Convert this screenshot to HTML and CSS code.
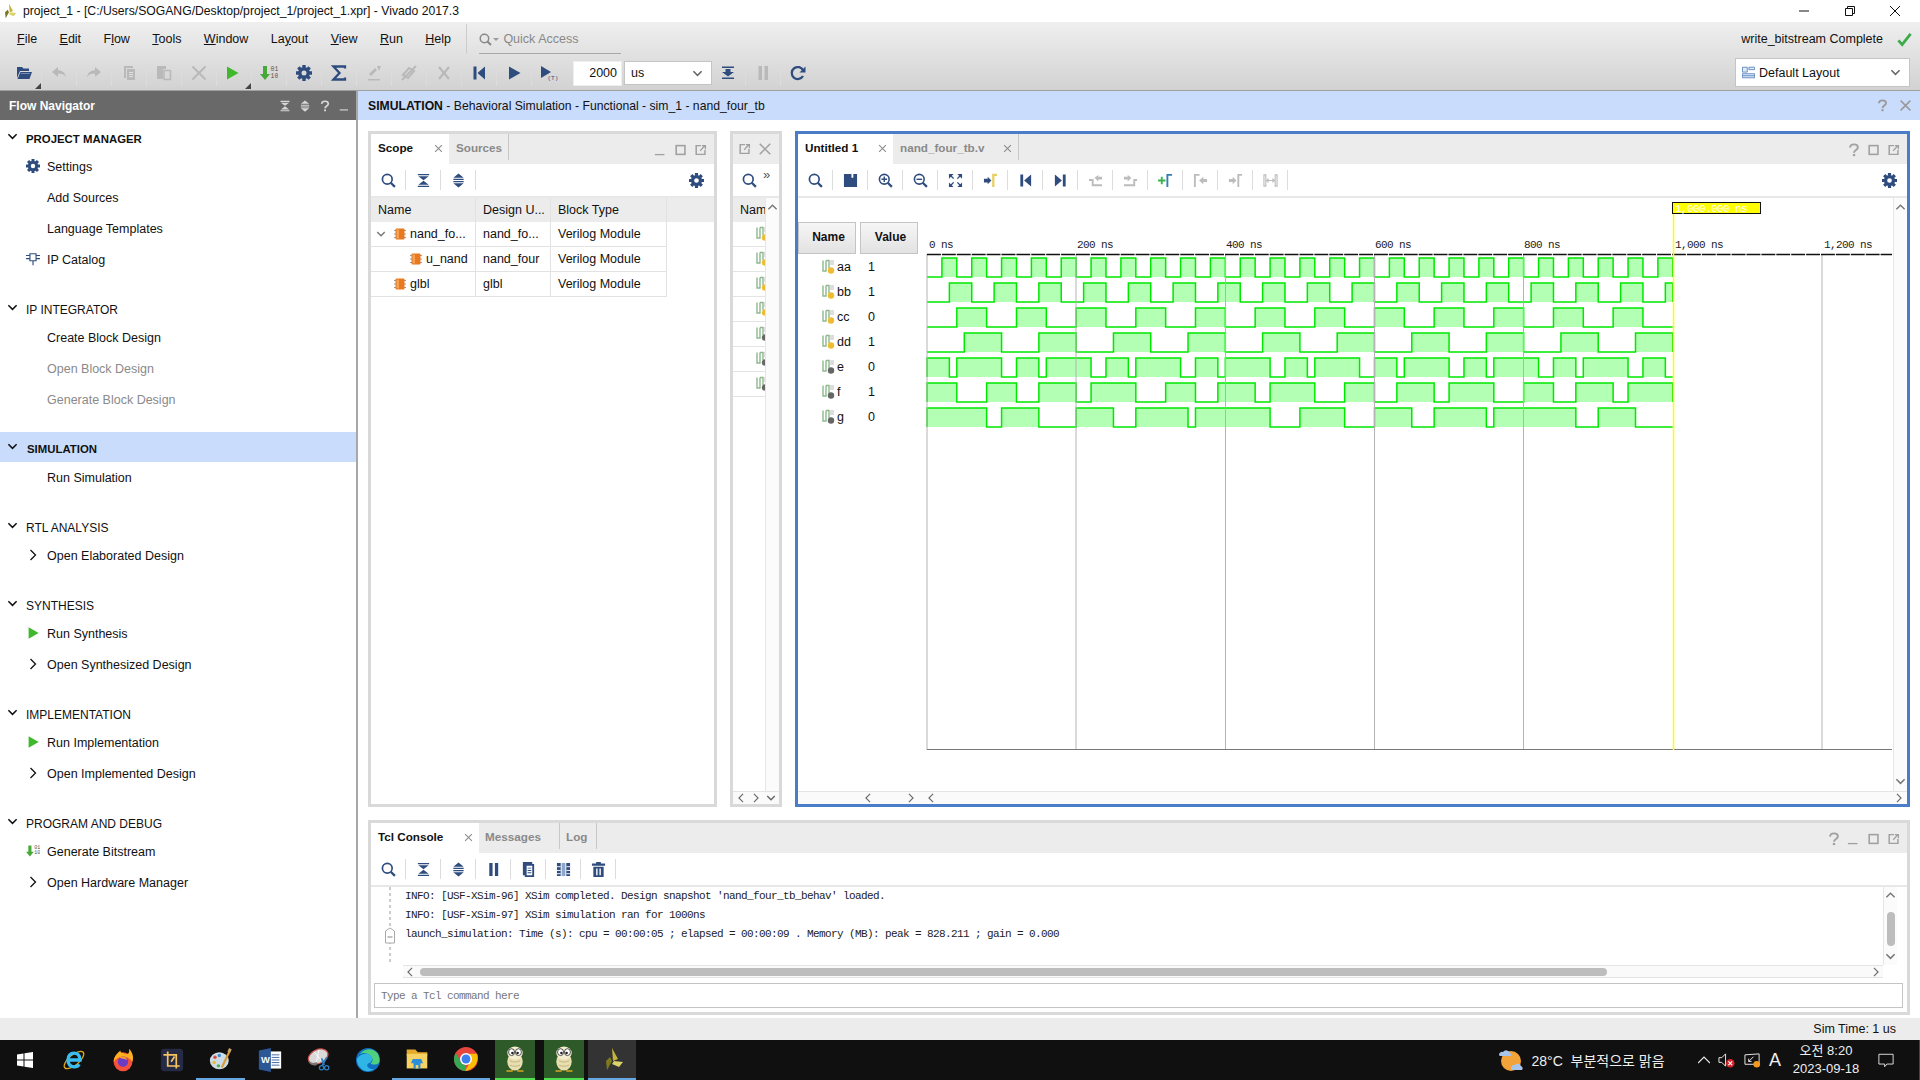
FILE: index.html
```html
<!DOCTYPE html>
<html>

<head>
    <meta charset="utf-8">
    <title>project_1 - Vivado 2017.3</title>
    <link rel="stylesheet" href="styles.css">
</head>

<body>
    <svg class="sprite" xmlns="http://www.w3.org/2000/svg">
        <symbol id="i-search" viewBox="0 0 16 16"><circle cx="6.7" cy="6.7" r="5.2" fill="none" stroke="currentColor" stroke-width="1.8"/><path d="M10.4 10.4l4.4 4.4" stroke="currentColor" stroke-width="2.4"/></symbol>
        <symbol id="i-collapse" viewBox="0 0 16 16"><path fill="currentColor" d="M2 1h12v1.500H2zM2.500 3.500h11L8 7.700zM8 8.300l5.500 4.200h-11zM2 13.500h12V15H2z"/></symbol>
        <symbol id="i-expand" viewBox="0 0 16 16"><path fill="currentColor" d="M8 .5L13.500 5h-11zM2.500 6.200h11v1.300h-11zM2.500 8.600h11v1.300h-11zM2.500 11h11L8 15.500z"/></symbol>
        <symbol id="i-gear" viewBox="0 0 16 16"><circle cx="8" cy="8" r="4.2" fill="none" stroke="currentColor" stroke-width="3.4"/><path id="teeth" fill="currentColor" d="M6.3 0h3.4v3H6.3zM6.3 13h3.4v3H6.3zM0 6.3h3v3.4H0zM13 6.3h3v3.4h-3z"/><path fill="currentColor" transform="rotate(45 8 8)" d="M6.3 0h3.4v3H6.3zM6.3 13h3.4v3H6.3zM0 6.3h3v3.4H0zM13 6.3h3v3.4h-3z"/></symbol>
        <symbol id="i-min" viewBox="0 0 16 16"><path fill="currentColor" d="M1 12.5h11V14H1z"/></symbol>
        <symbol id="i-max" viewBox="0 0 16 16"><rect x="2.5" y="3" width="10" height="10" fill="none" stroke="currentColor" stroke-width="1.8"/></symbol>
        <symbol id="i-float" viewBox="0 0 16 16"><path fill="none" stroke="currentColor" stroke-width="1.7" d="M8 3H2.5v10h10V8"/><path fill="none" stroke="currentColor" stroke-width="1.5" d="M7 9l5-5.5M9 3h4v4"/></symbol>
        <symbol id="i-close" viewBox="0 0 16 16"><path fill="none" stroke="currentColor" stroke-width="1.8" d="M2 2l12 12M14 2L2 14"/></symbol>
        <symbol id="i-help" viewBox="0 0 16 16"><path fill="none" stroke="currentColor" stroke-width="2.2" d="M3.5 5.2C3.7 2.8 5.7 1.6 8 1.6s4.4 1.2 4.4 3.4c0 3-4.2 3-4.4 6.2"/><path fill="currentColor" d="M6.7 12.5h2.6V15H6.7z"/></symbol>
        <symbol id="i-down" viewBox="0 0 12 12"><path fill="none" stroke="currentColor" stroke-width="1.7" d="M1.5 3.5L6 8l4.5-4.5"/></symbol>
        <symbol id="i-up" viewBox="0 0 12 12"><path fill="none" stroke="currentColor" stroke-width="1.5" d="M1.5 8L6 3.5 10.500 8"/></symbol>
        <symbol id="i-right" viewBox="0 0 12 12"><path fill="none" stroke="currentColor" stroke-width="1.3" d="M3.500 1L8.500 6l-5 5"/></symbol>
        <symbol id="i-left" viewBox="0 0 12 12"><path fill="none" stroke="currentColor" stroke-width="1.3" d="M8.500 1L3.500 6l5 5"/></symbol>
        <symbol id="i-chip" viewBox="0 0 14 14"><path fill="#9a9a9a" d="M1 3h12v1H1zM1 6.500h12v1H1zM1 10h12v1H1z"/><rect x="2.500" y="1.500" width="9" height="11" rx="1" fill="#e8791f"/><rect x="3.500" y="2.500" width="2.500" height="9" fill="#f4a255"/></symbol>
        <symbol id="i-sig-y" viewBox="0 0 14 16"><path fill="none" stroke="#8db98d" stroke-width="1.400" d="M2 1.500V12h3V1.500M5 1.500h3V9"/><path fill="none" stroke="#bbb" d="M10 1v5M12 1v5"/><circle cx="10" cy="11.500" r="3.200" fill="#eebb33"/></symbol>
        <symbol id="i-sig-g" viewBox="0 0 14 16"><path fill="none" stroke="#8db98d" stroke-width="1.400" d="M2 1.500V12h3V1.500M5 1.500h3V9"/><path fill="none" stroke="#bbb" d="M10 1v5M12 1v5"/><circle cx="10" cy="11.500" r="3.200" fill="#666"/></symbol>
        <symbol id="i-ipcat" viewBox="0 0 16 16"><path fill="none" stroke="currentColor" stroke-width="1.300" d="M4.500 2h7v8h-7zM8 10v5M0 4h4.500M0 7.500h4.500M11.500 4H16M11.500 7.500H16"/></symbol>
        <symbol id="i-play" viewBox="0 0 16 16"><path fill="currentColor" d="M3 1.500v13L14.500 8z"/></symbol>
        <symbol id="i-bits" viewBox="0 0 18 16"><path fill="#46a838" d="M3 1h4v8h3l-5 6-5-6h3z"/><text class="bits" x="10.500" y="6">01</text><text class="bits" x="10.500" y="12.500">10</text></symbol>
        <symbol id="i-open" viewBox="0 0 16 16"><path fill="#2f4c7e" d="M1 2h5l1.500 1.500H13V6H4L1 13z"/><path fill="#2f4c7e" d="M4.500 7H16l-2.500 7H1.500z"/><path fill="#fff" opacity=".35" d="M5 8h9l-.4 1H4.600z"/></symbol>
        <symbol id="i-undo" viewBox="0 0 16 16"><path fill="currentColor" d="M1 7l6-5v3.200c4 0 7 2 8 7-2-3-4-3.400-8-3.400V12z"/></symbol>
        <symbol id="i-redo" viewBox="0 0 16 16"><path fill="currentColor" d="M15 7L9 2v3.200c-4 0-7 2-8 7 2-3 4-3.400 8-3.400V12z"/></symbol>
        <symbol id="i-copy" viewBox="0 0 16 16"><path fill="currentColor" d="M3 1h9v2H5v10H3z"/><path fill="currentColor" d="M6 4h8v11H6z"/><path stroke="#e0e0e0" d="M8 7.500h4M8 9.500h4M8 11.500h4"/></symbol>
        <symbol id="i-paste" viewBox="0 0 16 16"><path fill="currentColor" d="M1 1h9v3H7v10H1z"/><path fill="none" stroke="currentColor" stroke-width="1.500" d="M8 5.500h6.500V14.500H8z"/></symbol>
        <symbol id="i-del" viewBox="0 0 16 16"><path fill="none" stroke="currentColor" stroke-width="2" d="M1.500 1.500l13 13M14.500 1.500l-13 13"/></symbol>
        <symbol id="i-sigma" viewBox="0 0 16 16"><path fill="none" stroke="currentColor" stroke-width="2.300" d="M14 3.500V1.500H2.500L8.500 8 2.500 14.500H14v-2"/></symbol>
        <symbol id="i-impl" viewBox="0 0 16 16"><path fill="currentColor" d="M2 14h12v1.500H2zM3 9l6-6 2 2-6 6zM11 1l4 0-2 5z"/></symbol>
        <symbol id="i-route" viewBox="0 0 16 16"><path fill="none" stroke="currentColor" stroke-width="2" d="M2 10l6-7 5 3-6 7zM1 15L15 1"/></symbol>
        <symbol id="i-xchip" viewBox="0 0 16 16"><path fill="none" stroke="currentColor" stroke-width="2.200" d="M3 2l10 12M13 2L3 14"/><path fill="currentColor" d="M6 6h4v4H6z"/></symbol>
        <symbol id="i-back" viewBox="0 0 16 16"><path fill="currentColor" d="M2.500 1.500h3v13h-3zM14 1.500v13L6.500 8z"/></symbol>
        <symbol id="i-fwd" viewBox="0 0 16 16"><path fill="currentColor" d="M10.500 1.500h3v13h-3zM2 1.500v13L9.500 8z"/></symbol>
        <symbol id="i-playt" viewBox="0 0 18 16"><path fill="currentColor" d="M1 1v12L11 7z"/><text class="bits tt" x="7.500" y="15">(T)</text></symbol>
        <symbol id="i-restart" viewBox="0 0 16 16"><path fill="currentColor" d="M2 1.500h12v1.500H2zM5.500 4h5v3H14l-6 4.500L2 7h3.500zM2 12.500h12V14H2z"/></symbol>
        <symbol id="i-pause" viewBox="0 0 16 16"><path fill="currentColor" d="M3.500 1h3.500v14H3.500zM9.500 1H13v14H9.500z"/></symbol>
        <symbol id="i-refresh" viewBox="0 0 16 16"><path fill="none" stroke="currentColor" stroke-width="2.300" d="M13 11a6 6 0 1 1 .2-5.500"/><path fill="currentColor" d="M15.500 1.500v6h-6z"/></symbol>
        <symbol id="i-save" viewBox="0 0 16 16"><path fill="currentColor" d="M1 1h8v4h2V1h4v14H1z"/></symbol>
        <symbol id="i-zin" viewBox="0 0 16 16"><circle cx="6.700" cy="6.700" r="5.200" fill="none" stroke="currentColor" stroke-width="1.700"/><path stroke="currentColor" stroke-width="2.400" d="M10.400 10.400l4.400 4.400"/><path stroke="currentColor" stroke-width="1.500" d="M3.700 6.700h6M6.700 3.700v6"/></symbol>
        <symbol id="i-zout" viewBox="0 0 16 16"><circle cx="6.700" cy="6.700" r="5.200" fill="none" stroke="currentColor" stroke-width="1.700"/><path stroke="currentColor" stroke-width="2.400" d="M10.400 10.400l4.400 4.400"/><path stroke="currentColor" stroke-width="1.500" d="M3.700 6.700h6"/></symbol>
        <symbol id="i-fit" viewBox="0 0 16 16"><path fill="currentColor" d="M1 1h5L1 6zM15 1v5l-5-5zM1 15v-5l5 5zM15 15h-5l5-5z"/><path stroke="currentColor" stroke-width="1.500" d="M3 3l3 3M13 3l-3 3M3 13l3-3M13 13l-3-3"/></symbol>
        <symbol id="i-gocur" viewBox="0 0 16 16"><path fill="#2f4c7e" d="M1 6h4V4l4 4-4 4v-2H1z"/><path fill="none" stroke="#e8cf68" stroke-width="2.500" d="M11 15V2h4"/></symbol>
        <symbol id="i-prevt" viewBox="0 0 16 16"><path fill="currentColor" d="M1 6.500h5V12h9v2H4V8.500H1zM7 5l4-3v2h4v3h-4v2z"/></symbol>
        <symbol id="i-nextt" viewBox="0 0 16 16"><path fill="currentColor" d="M15 6.500h-4V12H1v2h12V8.500h2zM1 4h4V2l4 3-4 4V7H1z"/></symbol>
        <symbol id="i-addm" viewBox="0 0 16 16"><path fill="#3cb44a" d="M0 7h3V4h2v3h3v2H5v3H3V9H0z"/><path fill="none" stroke="#2e7fb8" stroke-width="2" d="M10 15V2h5"/></symbol>
        <symbol id="i-prevm" viewBox="0 0 16 16"><path fill="none" stroke="currentColor" stroke-width="2" d="M2 15V2h5"/><path fill="currentColor" d="M15 6.500h-4V4L6.500 8l4.500 4v-2.500h4z"/></symbol>
        <symbol id="i-nextm" viewBox="0 0 16 16"><path fill="currentColor" d="M1 6.500h4V4l4 4-4 4v-2.500H1z"/><path fill="none" stroke="currentColor" stroke-width="2" d="M11 15V2h4"/></symbol>
        <symbol id="i-swap" viewBox="0 0 16 16"><path fill="none" stroke="currentColor" stroke-width="1.200" d="M1 2h2v12H1zM13 2h2v12h-2zM4 8h8M6 6L4 8l2 2M10 6l2 2-2 2"/></symbol>
        <symbol id="i-page" viewBox="0 0 16 16"><path fill="currentColor" fill-rule="evenodd" d="M2 0h10v2h2v14H4v-2H2zM6 4v10h6V4zM7 6h4v1H7zM7 8.500h4v1H7zM7 11h4v1H7z"/></symbol>
        <symbol id="i-cols" viewBox="0 0 16 16"><path fill="currentColor" d="M1 1h4v14H1zM11 1h4v14h-4z"/><path fill="#8ea6cc" d="M6 1h4v14H6z"/><path stroke="#fff" d="M1 5h4M1 9h4M1 12.500h4M11 5h4M11 9h4M11 12.500h4"/></symbol>
        <symbol id="i-trash" viewBox="0 0 16 16"><path fill="currentColor" fill-rule="evenodd" d="M5.500 0h5v1.500H15V4H1V1.500h4.500zM2.500 5h11v11h-11zM5.500 7v7H7V7zM9 7v7h1.500V7z"/></symbol>
        <symbol id="i-layout" viewBox="0 0 16 16"><path fill="#dfeafa" stroke="#4d7cb8" d="M.5 1.500h6v6h-6zM8.500 1.500h7v3h-7zM.5 9.500h15v5H.5z"/><path stroke="#4d7cb8" d="M.5 12h15"/></symbol>
        <symbol id="i-vivado" viewBox="0 0 24 24"><path fill="#c3b23c" d="M12 1l6 11-5 2z"/><path fill="#7d7a1e" d="M10 10l2 4-5 9-1-9z"/><path fill="#dcd46a" d="M14 14l9 1-4 5-7-3z"/></symbol>
        <symbol id="i-penguin" viewBox="0 0 28 32"><ellipse cx="14" cy="19" rx="9" ry="10.500" fill="#e9deb0"/><ellipse cx="14" cy="9" rx="9" ry="7.500" fill="#f4edcf"/><ellipse cx="10" cy="8" rx="3.500" ry="4" fill="#fff" stroke="#333"/><ellipse cx="18" cy="8" rx="3.500" ry="4" fill="#fff" stroke="#333"/><circle cx="11" cy="9" r="1.500" fill="#222"/><circle cx="17" cy="9" r="1.500" fill="#222"/><path fill="#d9a520" d="M4 29h8l-1 2H4zM16 29h8v2h-7z"/><path fill="none" stroke="#b9ad78" d="M8 18c4 2 8 2 12 0M8 23c4 2 8 2 12 0"/></symbol>
    </svg>

    <div class="titlebar">
        <svg class="title-logo"><use href="#i-vivado"/></svg>
        <span class="title-text">project_1 - [C:/Users/SOGANG/Desktop/project_1/project_1.xpr] - Vivado 2017.3</span>
        <div class="win-buttons">
            <svg viewBox="0 0 12 12"><path stroke="#111" d="M1 6h10"/></svg>
            <svg viewBox="0 0 12 12"><path fill="none" stroke="#111" d="M1.500 3.500h7v7h-7zM3.500 3.500v-2h7v7h-2"/></svg>
            <svg viewBox="0 0 12 12"><path stroke="#111" d="M1 1l10 10M11 1L1 11"/></svg>
        </div>
    </div>

    <div class="appbar">
        <div class="menubar">
            <span><u>F</u>ile</span>
            <span><u>E</u>dit</span>
            <span>F<u>l</u>ow</span>
            <span><u>T</u>ools</span>
            <span><u>W</u>indow</span>
            <span>La<u>y</u>out</span>
            <span><u>V</u>iew</span>
            <span><u>R</u>un</span>
            <span><u>H</u>elp</span>
            <div class="quick-access">
                <svg class="ic-s off"><use href="#i-search"/></svg>
                <span class="quick-arrow"></span>
                <span class="quick-text">Quick Access</span>
            </div>
            <div class="run-status">write_bitstream Complete
                <svg class="status-check" viewBox="0 0 16 16"><path fill="none" stroke="#3cab4a" stroke-width="3" d="M1.500 9l4 4.500L14.500 2"/></svg>
            </div>
        </div>
        <div class="toolbar">
            <button class="tbtn has-menu"><svg class="ic"><use href="#i-open"/></svg></button>
            <button class="tbtn off"><svg class="ic"><use href="#i-undo"/></svg></button>
            <button class="tbtn off"><svg class="ic"><use href="#i-redo"/></svg></button>
            <button class="tbtn off"><svg class="ic"><use href="#i-copy"/></svg></button>
            <button class="tbtn off"><svg class="ic"><use href="#i-paste"/></svg></button>
            <button class="tbtn off"><svg class="ic"><use href="#i-del"/></svg></button>
            <button class="tbtn green has-menu"><svg class="ic"><use href="#i-play"/></svg></button>
            <button class="tbtn"><svg class="ic ic-wide"><use href="#i-bits"/></svg></button>
            <button class="tbtn"><svg class="ic"><use href="#i-gear"/></svg></button>
            <button class="tbtn"><svg class="ic"><use href="#i-sigma"/></svg></button>
            <button class="tbtn off"><svg class="ic"><use href="#i-impl"/></svg></button>
            <button class="tbtn off"><svg class="ic"><use href="#i-route"/></svg></button>
            <button class="tbtn off"><svg class="ic"><use href="#i-xchip"/></svg></button>
            <button class="tbtn"><svg class="ic"><use href="#i-back"/></svg></button>
            <button class="tbtn"><svg class="ic"><use href="#i-play"/></svg></button>
            <button class="tbtn"><svg class="ic ic-wide"><use href="#i-playt"/></svg></button>
            <div class="time-input">2000</div>
            <div class="unit-select">us<svg class="chev-sel"><use href="#i-down"/></svg></div>
            <button class="tbtn after-select"><svg class="ic"><use href="#i-restart"/></svg></button>
            <button class="tbtn off"><svg class="ic"><use href="#i-pause"/></svg></button>
            <button class="tbtn"><svg class="ic"><use href="#i-refresh"/></svg></button>
            <div class="layout-select">
                <svg class="ic-layout"><use href="#i-layout"/></svg>
                <span>Default Layout</span>
                <svg class="chev-sel"><use href="#i-down"/></svg>
            </div>
        </div>
    </div>

    <div class="workspace">
        <div class="nav">
            <div class="nav-head">
                <span>Flow Navigator</span>
                <div class="nav-head-icons">
                    <svg><use href="#i-collapse"/></svg>
                    <svg><use href="#i-expand"/></svg>
                    <svg><use href="#i-help"/></svg>
                    <svg><use href="#i-min"/></svg>
                </div>
            </div>
            <div class="nav-body">
                <div class="nav-section">
                    <div class="sec-title strong"><svg><use href="#i-down"/></svg>PROJECT MANAGER</div>
                    <div class="nav-item"><span class="slot"><svg class="navy"><use href="#i-gear"/></svg></span>Settings</div>
                    <div class="nav-item"><span class="slot"></span>Add Sources</div>
                    <div class="nav-item"><span class="slot"></span>Language Templates</div>
                    <div class="nav-item"><span class="slot"><svg class="navy"><use href="#i-ipcat"/></svg></span>IP Catalog</div>
                </div>
                <div class="nav-section">
                    <div class="sec-title"><svg><use href="#i-down"/></svg>IP INTEGRATOR</div>
                    <div class="nav-item"><span class="slot"></span>Create Block Design</div>
                    <div class="nav-item dim"><span class="slot"></span>Open Block Design</div>
                    <div class="nav-item dim"><span class="slot"></span>Generate Block Design</div>
                </div>
                <div class="nav-section">
                    <div class="sec-title strong active"><svg><use href="#i-down"/></svg>SIMULATION</div>
                    <div class="nav-item"><span class="slot"></span>Run Simulation</div>
                </div>
                <div class="nav-section">
                    <div class="sec-title"><svg><use href="#i-down"/></svg>RTL ANALYSIS</div>
                    <div class="nav-item"><span class="slot"><svg class="arrow"><use href="#i-right"/></svg></span>Open Elaborated Design</div>
                </div>
                <div class="nav-section">
                    <div class="sec-title"><svg><use href="#i-down"/></svg>SYNTHESIS</div>
                    <div class="nav-item"><span class="slot"><svg class="run"><use href="#i-play"/></svg></span>Run Synthesis</div>
                    <div class="nav-item"><span class="slot"><svg class="arrow"><use href="#i-right"/></svg></span>Open Synthesized Design</div>
                </div>
                <div class="nav-section">
                    <div class="sec-title"><svg><use href="#i-down"/></svg>IMPLEMENTATION</div>
                    <div class="nav-item"><span class="slot"><svg class="run"><use href="#i-play"/></svg></span>Run Implementation</div>
                    <div class="nav-item"><span class="slot"><svg class="arrow"><use href="#i-right"/></svg></span>Open Implemented Design</div>
                </div>
                <div class="nav-section">
                    <div class="sec-title"><svg><use href="#i-down"/></svg>PROGRAM AND DEBUG</div>
                    <div class="nav-item"><span class="slot"><svg><use href="#i-bits"/></svg></span>Generate Bitstream</div>
                    <div class="nav-item"><span class="slot"><svg class="arrow"><use href="#i-right"/></svg></span>Open Hardware Manager</div>
                </div>
            </div>
        </div>

        <div class="content">
            <div class="sim-head">
                <span><b>SIMULATION</b> - Behavioral Simulation - Functional - sim_1 - nand_four_tb</span>
                <div class="sim-head-icons">
                    <svg><use href="#i-help"/></svg>
                    <svg><use href="#i-close"/></svg>
                </div>
            </div>
            <div class="panes">
                <div class="pane-row">
                    <div class="panel scope-panel">
                        <div class="panel-tabs">
                            <div class="tab active tab-scope">Scope<svg class="tab-x"><use href="#i-close"/></svg></div>
                            <div class="tab">Sources</div>
                            <div class="panel-win">
                                <svg><use href="#i-min"/></svg>
                                <svg><use href="#i-max"/></svg>
                                <svg><use href="#i-float"/></svg>
                            </div>
                        </div>
                        <div class="panel-tools">
                            <span class="tool"><svg><use href="#i-search"/></svg></span>
                            <span class="tool"><svg><use href="#i-collapse"/></svg></span>
                            <span class="tool"><svg><use href="#i-expand"/></svg></span>
                            <span class="tool tool-end"><svg><use href="#i-gear"/></svg></span>
                        </div>
                        <div class="tree-row tree-head">
                            <div>Name</div><div>Design U...</div><div>Block Type</div>
                        </div>
                        <div class="tree-row tree-data">
                            <div class="tree-cell"><span class="twist"><svg><use href="#i-down"/></svg></span><svg class="chip"><use href="#i-chip"/></svg>nand_fo...</div>
                            <div>nand_fo...</div><div>Verilog Module</div>
                        </div>
                        <div class="tree-row tree-data">
                            <div class="tree-cell"><span class="twist lvl1"></span><svg class="chip"><use href="#i-chip"/></svg>u_nand</div>
                            <div>nand_four</div><div>Verilog Module</div>
                        </div>
                        <div class="tree-row tree-data">
                            <div class="tree-cell"><span class="twist"></span><svg class="chip"><use href="#i-chip"/></svg>glbl</div>
                            <div>glbl</div><div>Verilog Module</div>
                        </div>
                    </div>

                    <div class="panel objects-panel">
                        <div class="panel-tabs obj-tabs">
                            <svg><use href="#i-float"/></svg>
                            <svg><use href="#i-close"/></svg>
                        </div>
                        <div class="panel-tools obj-tools">
                            <svg class="obj-search"><use href="#i-search"/></svg>
                            <span class="more">»</span>
                        </div>
                        <div class="obj-body">
                            <div class="obj-list">
                                <div class="obj-head">Nam</div>
                                <div class="obj-row"><svg><use href="#i-sig-y"/></svg></div>
                                <div class="obj-row"><svg><use href="#i-sig-y"/></svg></div>
                                <div class="obj-row"><svg><use href="#i-sig-y"/></svg></div>
                                <div class="obj-row"><svg><use href="#i-sig-y"/></svg></div>
                                <div class="obj-row"><svg><use href="#i-sig-g"/></svg></div>
                                <div class="obj-row"><svg><use href="#i-sig-g"/></svg></div>
                                <div class="obj-row"><svg><use href="#i-sig-g"/></svg></div>
                            </div>
                            <div class="vscroll">
                                <svg><use href="#i-up"/></svg>
                            </div>
                        </div>
                        <div class="hscroll obj-hscroll">
                            <svg><use href="#i-left"/></svg>
                            <svg><use href="#i-right"/></svg>
                            <svg><use href="#i-down"/></svg>
                        </div>
                    </div>

                    <div class="panel wave-panel">
                        <div class="panel-tabs">
                            <div class="tab active tab-untitled">Untitled 1<svg class="tab-x"><use href="#i-close"/></svg></div>
                            <div class="tab tab-src">nand_four_tb.v<svg class="tab-x"><use href="#i-close"/></svg></div>
                            <div class="panel-win">
                                <svg><use href="#i-help"/></svg>
                                <svg><use href="#i-max"/></svg>
                                <svg><use href="#i-float"/></svg>
                            </div>
                        </div>
                        <div class="panel-tools">
                            <span class="tool"><svg><use href="#i-search"/></svg></span>
                            <span class="tool"><svg><use href="#i-save"/></svg></span>
                            <span class="tool"><svg><use href="#i-zin"/></svg></span>
                            <span class="tool"><svg><use href="#i-zout"/></svg></span>
                            <span class="tool"><svg><use href="#i-fit"/></svg></span>
                            <span class="tool"><svg><use href="#i-gocur"/></svg></span>
                            <span class="tool"><svg><use href="#i-back"/></svg></span>
                            <span class="tool"><svg><use href="#i-fwd"/></svg></span>
                            <span class="tool off"><svg><use href="#i-prevt"/></svg></span>
                            <span class="tool off"><svg><use href="#i-nextt"/></svg></span>
                            <span class="tool"><svg><use href="#i-addm"/></svg></span>
                            <span class="tool off"><svg><use href="#i-prevm"/></svg></span>
                            <span class="tool off"><svg><use href="#i-nextm"/></svg></span>
                            <span class="tool off"><svg><use href="#i-swap"/></svg></span>
                            <span class="tool tool-end"><svg><use href="#i-gear"/></svg></span>
                        </div>
                        <div class="wave-body">
                            <div class="wave-names">
                                <div class="wave-head"><div>Name</div><div>Value</div></div>
                                <div class="sig-row"><svg><use href="#i-sig-y"/></svg><span class="sig-name">aa</span><span>1</span></div>
                                <div class="sig-row"><svg><use href="#i-sig-y"/></svg><span class="sig-name">bb</span><span>1</span></div>
                                <div class="sig-row"><svg><use href="#i-sig-y"/></svg><span class="sig-name">cc</span><span>0</span></div>
                                <div class="sig-row"><svg><use href="#i-sig-y"/></svg><span class="sig-name">dd</span><span>1</span></div>
                                <div class="sig-row"><svg><use href="#i-sig-g"/></svg><span class="sig-name">e</span><span>0</span></div>
                                <div class="sig-row"><svg><use href="#i-sig-g"/></svg><span class="sig-name">f</span><span>1</span></div>
                                <div class="sig-row"><svg><use href="#i-sig-g"/></svg><span class="sig-name">g</span><span>0</span></div>
                            </div>
                            <svg class="wave" width="967" height="593" viewBox="0 0 967 593">
                                <!-- signal paths are in ns, scale is 149.16px per 200ns -->
                                <g class="sigs">
                                    <path transform="translate(1 60) scale(.7458 1)" d="M0 19H20V0H40V19H60V0H80V19H100V0H120V19H140V0H160V19H180V0H200V19H220V0H240V19H260V0H280V19H300V0H320V19H340V0H360V19H380V0H400V19H420V0H440V19H460V0H480V19H500V0H520V19H540V0H560V19H580V0H600V19H620V0H640V19H660V0H680V19H700V0H720V19H740V0H760V19H780V0H800V19H820V0H840V19H860V0H880V19H900V0H920V19H940V0H960V19H980V0H1000V19"/>
                                    <path transform="translate(1 85) scale(.7458 1)" d="M0 19H30V0H60V19H90V0H120V19H150V0H180V19H210V0H240V19H270V0H300V19H330V0H360V19H390V0H420V19H450V0H480V19H510V0H540V19H570V0H600V19H630V0H660V19H690V0H720V19H750V0H780V19H810V0H840V19H870V0H900V19H930V0H960V19H990V0H1000V19"/>
                                    <path transform="translate(1 110) scale(.7458 1)" d="M0 19H40V0H80V19H120V0H160V19H200V0H240V19H280V0H320V19H360V0H400V19H440V0H480V19H520V0H560V19H600V0H640V19H680V0H720V19H760V0H800V19H840V0H880V19H920V0H960V19H1000"/>
                                    <path transform="translate(1 135) scale(.7458 1)" d="M0 19H50V0H100V19H150V0H200V19H250V0H300V19H350V0H400V19H450V0H500V19H550V0H600V19H650V0H700V19H750V0H800V19H850V0H900V19H950V0H1000V19"/>
                                    <path transform="translate(1 160) scale(.7458 1)" d="M0 19V0H30V19H40V0H100V19H120V0H150V19H160V0H220V19H240V0H270V19H280V0H340V19H360V0H390V19H400V0H460V19H480V0H510V19H520V0H580V19H600V0H630V19H640V0H700V19H720V0H750V19H760V0H820V19H840V0H870V19H880V0H940V19H960V0H990V19H1000"/>
                                    <path transform="translate(1 185) scale(.7458 1)" d="M0 19V0H40V19H80V0H120V19H150V0H200V19H220V0H280V19H320V0H360V19H390V0H440V19H460V0H520V19H560V0H600V19H630V0H680V19H700V0H760V19H800V0H840V19H870V0H920V19H940V0H1000V19"/>
                                    <path transform="translate(1 210) scale(.7458 1)" d="M0 19V0H80V19H100V0H150V19H200V0H250V19H280V0H350V19H360V0H460V19H500V0H560V19H600V0H650V19H680V0H750V19H760V0H870V19H900V0H950V19H1000"/>
                                </g>
                                <path class="grid" d="M1 56V552M150 56V552M299.500 56V552M448.500 56V552M597.500 56V552M896 56V552"/>
                                <path class="ruler" d="M1 56.500H966"/>
                                <path class="baseline" d="M1 551.500H966"/>
                                <text class="tick" x="3" y="50">0 ns</text>
                                <text class="tick" x="151" y="50">200 ns</text>
                                <text class="tick" x="300" y="50">400 ns</text>
                                <text class="tick" x="449" y="50">600 ns</text>
                                <text class="tick" x="598" y="50">800 ns</text>
                                <text class="tick" x="749" y="50">1,000 ns</text>
                                <text class="tick" x="898" y="50">1,200 ns</text>
                                <path class="cursor" d="M747.500 15V552"/>
                                <rect class="flag" x="746.500" y="4.500" width="88" height="11"/>
                                <text class="flag-text" x="749" y="14">1,000.000 ns</text>
                            </svg>
                            <div class="vscroll">
                                <svg><use href="#i-up"/></svg>
                                <svg><use href="#i-down"/></svg>
                            </div>
                        </div>
                        <div class="hscroll wave-hscroll">
                            <div class="names-scroll">
                                <svg><use href="#i-left"/></svg>
                                <svg><use href="#i-right"/></svg>
                            </div>
                            <div class="plot-scroll">
                                <svg><use href="#i-left"/></svg>
                                <svg><use href="#i-right"/></svg>
                            </div>
                        </div>
                    </div>
                </div>

                <div class="panel console-panel">
                    <div class="panel-tabs">
                        <div class="tab active tab-tcl">Tcl Console<svg class="tab-x"><use href="#i-close"/></svg></div>
                        <div class="tab tab-msg">Messages</div>
                        <div class="tab tab-log">Log</div>
                        <div class="panel-win">
                            <svg><use href="#i-help"/></svg>
                            <svg><use href="#i-min"/></svg>
                            <svg><use href="#i-max"/></svg>
                            <svg><use href="#i-float"/></svg>
                        </div>
                    </div>
                    <div class="panel-tools">
                        <span class="tool"><svg><use href="#i-search"/></svg></span>
                        <span class="tool"><svg><use href="#i-collapse"/></svg></span>
                        <span class="tool"><svg><use href="#i-expand"/></svg></span>
                        <span class="tool"><svg><use href="#i-pause"/></svg></span>
                        <span class="tool"><svg><use href="#i-page"/></svg></span>
                        <span class="tool"><svg><use href="#i-cols"/></svg></span>
                        <span class="tool"><svg><use href="#i-trash"/></svg></span>
                    </div>
                    <div class="log-row">
                        <svg class="gutter" viewBox="0 0 32 78">
                            <path d="M19 0V78" stroke="#999" stroke-dasharray="3 3"/>
                            <path d="M14.500 44L19 41l4.500 3v12h-9z" fill="#fff" stroke="#aaa"/>
                            <path d="M16.500 50h5" stroke="#888"/>
                        </svg>
                        <div class="log">
                            <div>INFO: [USF-XSim-96] XSim completed. Design snapshot 'nand_four_tb_behav' loaded.</div>
                            <div>INFO: [USF-XSim-97] XSim simulation ran for 1000ns</div>
                            <div>launch_simulation: Time (s): cpu = 00:00:05 ; elapsed = 00:00:09 . Memory (MB): peak = 828.211 ; gain = 0.000</div>
                        </div>
                        <div class="vscroll log-vscroll">
                            <svg><use href="#i-up"/></svg>
                            <div class="vthumb"></div>
                            <svg><use href="#i-down"/></svg>
                        </div>
                    </div>
                    <div class="hscroll log-hscroll">
                        <svg><use href="#i-left"/></svg>
                        <div class="hthumb"></div>
                        <svg><use href="#i-right"/></svg>
                    </div>
                    <div class="tcl-input">Type a Tcl command here</div>
                </div>
            </div>
        </div>
    </div>

    <div class="statusbar">Sim Time: 1 us</div>

    <div class="taskbar">
        <div class="task start">
            <svg viewBox="0 0 16 16"><path fill="#fff" d="M0 2.500l6.500-1v6H0zM7.500 1.300L16 0v7.500H7.500zM0 8.500h6.500v6l-6.500-1zM7.500 8.500H16V16l-8.500-1.300z"/></svg>
        </div>
        <div class="task">
            <svg viewBox="0 0 28 28"><ellipse cx="14" cy="14" rx="14" ry="6" transform="rotate(-40 14 14)" fill="none" stroke="#e0a81c" stroke-width="1.500"/><path fill="none" stroke="#39bdf0" stroke-width="4" d="M7 14h14c0-5-3-8-7-8s-7 3-7 8 3 8 7 8c3 0 5-1 6-3"/></svg>
        </div>
        <div class="task">
            <svg viewBox="0 0 28 28"><circle cx="14" cy="16" r="11" fill="#f5503c"/><path fill="#ffb01f" d="M3 16C4 8 9 5 11 3c0 4 3 2 6 4 3 1 5-1 4-6 4 4 6 10 4 15-3-4-7-6-11-6S6 13 3 16z"/><circle cx="14" cy="16" r="6" fill="#6a3bc4"/><path fill="#ff9c2a" d="M10 11c3-2 8-1 9 3-3-2-6-1-9-3z"/></svg>
        </div>
        <div class="task">
            <svg viewBox="0 0 28 28"><rect x="1" y="1" width="26" height="26" rx="4" fill="#262b45"/><path fill="none" stroke="#f6c560" stroke-width="2" d="M9 4v17h14M4 8h15v16"/><path stroke="#f6c560" stroke-width="2" d="M13 16l4-6"/></svg>
        </div>
        <div class="task seen">
            <svg viewBox="0 0 28 28"><ellipse cx="12" cy="16" rx="11" ry="10" fill="#cddce6"/><circle cx="7" cy="12" r="2" fill="#d94b3e"/><circle cx="6" cy="18" r="2" fill="#e8b93a"/><circle cx="11" cy="22" r="2" fill="#4bb04b"/><circle cx="12" cy="10" r="2" fill="#3c8fd6"/><path stroke="#d99a3a" stroke-width="2.500" d="M15 24L24 5"/><path stroke="#caa366" stroke-width="3.500" d="M23 6l2-4"/></svg>
        </div>
        <div class="task">
            <svg viewBox="0 0 28 28"><path fill="#fff" d="M10 4h17v20H10z"/><path stroke="#2b5797" d="M16 8h9M16 11h9M16 14h9M16 17h9M16 20h9"/><path fill="#2b5797" d="M1 3l14-3v28L1 25z"/><text class="word-w" x="3.500" y="18">W</text></svg>
        </div>
        <div class="task">
            <svg viewBox="0 0 28 28"><ellipse cx="13" cy="10" rx="12" ry="8" transform="rotate(-25 13 10)" fill="#d9d9d9" stroke="#c9504a" stroke-width="1.500"/><path stroke="#fff" d="M8 4l10 12M14 2l-3 14"/><path fill="#777" d="M1 15c3 3 8 3 11 1l-1 4c-4 1-8 0-10-5z"/><path fill="none" stroke="#2f7fc4" stroke-width="2" d="M17 12l3 8M23 11l-5 9"/><circle cx="17" cy="23" r="2.500" fill="none" stroke="#2f7fc4" stroke-width="1.500"/><circle cx="23" cy="23" r="2.500" fill="none" stroke="#2f7fc4" stroke-width="1.500"/></svg>
        </div>
        <div class="task">
            <svg viewBox="0 0 28 28"><circle cx="14" cy="14" r="14" fill="#0f6fc2"/><path fill="#4ed07f" d="M4 8c4-7 14-9 20-3 3 3 4 8 3 12-2 3-7 3-10 1 3-2 3-6 0-9C12 5 7 5 4 8z"/><path fill="#2fb6e6" d="M1 13c3-6 11-8 15-5 3 2 4 6 1 9-5 1-5 5-1 7 2 1 4 1 6 0-5 4-12 4-16 0-3-3-5-6-5-11z"/></svg>
        </div>
        <div class="task seen">
            <svg viewBox="0 0 28 28"><path fill="#e5a92c" d="M2 3h10l3 3h11v4H2z"/><path fill="#f6d264" d="M2 8h24v17H2z"/><path fill="#2a8fd8" d="M9 14h10l2 5h-3v6h-8v-6H7z"/><path fill="#f6d264" d="M12.500 21h3v4h-3z"/></svg>
        </div>
        <div class="task seen">
            <svg viewBox="0 0 28 28"><circle cx="14" cy="14" r="14" fill="#e8453c"/><path fill="#34a853" d="M14 28C6 28 0 22 0 14c0-3 1-5 2-7l7 12c1 1 3 2 5 2z"/><path fill="#fbbc05" d="M27 8c2 7-1 15-8 18-2 1-4 2-6 2l6-11c1-1 2-5-1-9z"/><circle cx="14" cy="14" r="7" fill="#fff"/><circle cx="14" cy="14" r="5.200" fill="#3d7ff0"/></svg>
        </div>
        <div class="task running tux"><svg viewBox="0 0 28 32"><use href="#i-penguin"/></svg></div>
        <div class="task running tux"><svg viewBox="0 0 28 32"><use href="#i-penguin"/></svg></div>
        <div class="task current"><svg viewBox="0 0 24 24"><use href="#i-vivado"/></svg></div>

        <div class="tray">
            <svg class="weather" viewBox="0 0 26 24"><circle cx="13" cy="13" r="10" fill="#f2a33a"/><path fill="#a8c4ea" d="M1 7a3 3 0 0 1 4-3 4 4 0 0 1 7 1 2.500 2.500 0 0 1 1 3H2a2 2 0 0 1-1-1zM13 20a3 3 0 0 1 4-3 3.500 3.500 0 0 1 6 1 2.500 2.500 0 0 1 1 4H14a2 2 0 0 1-1-2z"/></svg>
            <span class="weather-text">28°C&nbsp; 부분적으로 맑음</span>
            <svg class="tray-up" viewBox="0 0 12 12"><path fill="none" stroke="#eee" stroke-width="1.200" d="M0 9l6-6 6 6"/></svg>
            <svg class="tray-ic" viewBox="0 0 18 18"><path fill="none" stroke="#eee" d="M1 6h3l4-4v13l-4-4H1z"/><circle cx="13" cy="12" r="4.500" fill="#d8232a"/><path stroke="#fff" stroke-width="1.200" d="M11 10l4 4M15 10l-4 4"/></svg>
            <svg class="tray-ic" viewBox="0 0 18 18"><path fill="none" stroke="#eee" d="M1 3l15-1v11H1z"/><path stroke="#eee" d="M5 10l5-5M5 7v3h3"/><circle cx="13.500" cy="13" r="3.500" fill="#f39a1e"/></svg>
            <span class="tray-a">A</span>
            <div class="clock"><div>오전 8:20</div><div>2023-09-18</div></div>
            <svg class="tray-note" viewBox="0 0 18 16"><path fill="none" stroke="#eee" d="M1 1h16v11H10l-2.500 3V12H1z"/></svg>
        </div>
    </div>
</body>

</html>
```

FILE: styles.css
```css
body {
    margin: 0;
    width: 1920px;
    height: 1080px;
    overflow: hidden;
    display: flex;
    flex-direction: column;
    background: white;
    color: #111;
    font-family: "Liberation Sans", Arial, sans-serif;
    font-size: 12.5px;
}

.sprite {
    display: none;
}

.bits {
    font-family: "Liberation Mono", monospace;
    font-size: 6.5px;
    fill: #555;
}

.bits.tt {
    font-size: 6px;
    fill: #2f4c7e;
}

/* title bar */
.titlebar {
    flex: 0 0 22px;
    display: flex;
    align-items: center;
}

.title-logo {
    width: 16px;
    height: 18px;
    margin-left: 1px;
}

.title-text {
    margin-left: 6px;
    font-size: 12.2px;
}

.win-buttons {
    margin-left: auto;
    display: flex;
    gap: 33.5px;
    padding-right: 19px;
}

.win-buttons svg {
    width: 12px;
    height: 12px;
}

/* menu and main toolbar */
.appbar {
    flex: 0 0 69px;
    box-sizing: border-box;
    border-bottom: 1.5px solid #a0a0a0;
    background: linear-gradient(#efefef, #d2d2d2);
}

.menubar {
    height: 36px;
    box-sizing: border-box;
    padding: 0 0 2px 17px;
    display: flex;
    align-items: center;
    gap: 22.4px;
}

.quick-access {
    display: flex;
    align-items: center;
    height: 30px;
    margin-left: -7px;
    padding-left: 12px;
    width: 142px;
    border-left: 1px solid #ccc;
    position: relative;
    color: #888;
}

.quick-access::after {
    content: "";
    position: absolute;
    left: 12px;
    right: 0;
    bottom: 0;
    border-bottom: 1px solid #a8a8a8;
}

.ic-s {
    width: 13px;
    height: 13px;
    color: #888;
}

.quick-arrow {
    border: 3px solid transparent;
    border-top-color: #999;
    margin: 3px 4px 0 1px;
}

.run-status {
    margin-left: auto;
    display: flex;
    align-items: center;
    gap: 14px;
    padding-right: 8px;
}

.status-check {
    width: 15px;
    height: 15px;
}

.toolbar {
    display: flex;
    align-items: flex-start;
    padding-left: 6px;
}

.tbtn {
    width: 35px;
    height: 30px;
    padding: 0;
    border: 0;
    background: none;
    color: #2f4c7e;
    display: flex;
    align-items: center;
    justify-content: center;
    position: relative;
}

.tbtn + .tbtn::before {
    content: "";
    position: absolute;
    left: 0;
    top: 4px;
    bottom: 2px;
    border-left: 1px solid #dcdcdc;
}

.tbtn.off {
    color: #b9b9b9;
}

.tbtn.green {
    color: #3fb82b;
}

.tbtn.green svg {
    margin-right: 3px;
}

.has-menu::after {
    content: "";
    position: absolute;
    right: 0;
    bottom: -1px;
    border: 3px solid transparent;
    border-right-color: #444;
    border-bottom-color: #444;
}

.ic {
    width: 16px;
    height: 16px;
}

.ic-wide {
    width: 18px;
}

.time-input {
    box-sizing: border-box;
    width: 49px;
    height: 25px;
    margin: 3px 0 0 7px;
    padding-right: 4px;
    line-height: 23px;
    text-align: right;
    background: white;
    border: 1px solid #eee;
}

.unit-select {
    box-sizing: border-box;
    width: 88px;
    height: 24px;
    margin: 3px 0 0 2px;
    padding: 0 8px 0 6px;
    display: flex;
    align-items: center;
    justify-content: space-between;
    background: white;
    border: 1px solid #c4c4c4;
}

.chev-sel {
    width: 11px;
    height: 11px;
    color: #666;
}

.after-select {
    margin-left: -2px;
}

.layout-select {
    box-sizing: border-box;
    width: 175px;
    height: 29px;
    margin-left: auto;
    margin-right: 10px;
    padding: 0 8px 0 6px;
    display: flex;
    align-items: center;
    gap: 4px;
    background: white;
    border: 1px solid #c4c4c4;
}

.layout-select .chev-sel {
    margin-left: auto;
}

.ic-layout {
    width: 13px;
    height: 13px;
}

/* main area */
.workspace {
    flex: 0 0 927px;
    display: flex;
}

.nav {
    flex: 0 0 358px;
    box-sizing: border-box;
    border-right: 2px solid #a8a8a8;
}

.nav-head {
    height: 29px;
    display: flex;
    align-items: center;
    justify-content: space-between;
    padding-left: 9px;
    background: #696969;
    color: white;
    font-weight: bold;
    font-size: 12px;
}

.nav-head-icons {
    display: flex;
    gap: 8px;
    padding-right: 5px;
}

.nav-head-icons svg {
    width: 12px;
    height: 12px;
    color: #d8d8d8;
}

.nav-body {
    padding-top: 4px;
}

.nav-section {
    margin-bottom: 20px;
}

.sec-title {
    height: 27px;
    box-sizing: border-box;
    padding: 2px 0 0 7px;
    display: flex;
    align-items: center;
    font-size: 12px;
}

.sec-title svg {
    width: 11px;
    height: 11px;
    margin: -5px 8px 0 0;
}

.sec-title.strong {
    font-weight: bold;
    font-size: 11.4px;
}

.sec-title.active {
    height: 30px;
    margin-top: -3px;
    padding-top: 3px;
    background: #c9dcfc;
}

.sec-title.active svg {
    margin-right: 9px;
}

.nav-item {
    height: 31px;
    display: flex;
    align-items: center;
}

.nav-item.dim {
    color: #8a8a8a;
}

.slot {
    width: 47px;
    flex: none;
    display: flex;
    padding-left: 26px;
    box-sizing: border-box;
}

.slot svg {
    width: 14px;
    height: 14px;
    margin-top: -2px;
}

.slot .navy {
    color: #2f4c7e;
}

.slot .run {
    color: #3fb82b;
}

.slot .arrow {
    width: 12px;
    height: 12px;
    margin-left: 1px;
}

.content {
    flex: 1;
    min-width: 0;
}

.sim-head {
    height: 29px;
    padding: 0 8px 0 10px;
    display: flex;
    align-items: center;
    justify-content: space-between;
    background: #c9dcfc;
    font-size: 12.2px;
}

.sim-head-icons {
    display: flex;
    gap: 10px;
}

.sim-head-icons svg {
    width: 13px;
    height: 13px;
    color: #999;
}

.panes {
    padding: 11px 10px 0;
}

.pane-row {
    height: 676px;
    display: flex;
    gap: 13px;
    margin-bottom: 13px;
}

/* panels */
.panel {
    box-sizing: border-box;
    border: 3px solid #d9d9d9;
    display: flex;
    flex-direction: column;
    min-width: 0;
}

.scope-panel {
    flex: 0 0 349px;
}

.objects-panel {
    flex: 0 0 52px;
}

.wave-panel {
    flex: 1;
    border-color: #4a7cc8;
}

.console-panel {
    height: 195px;
}

.panel-tabs {
    flex: 0 0 30px;
    display: flex;
    background: #ececec;
}

.tab {
    display: flex;
    align-items: center;
    height: 26px;
    padding: 0 6px 0 7px;
    font-weight: bold;
    font-size: 11.7px;
    color: #8a8a8a;
    border-right: 1px solid #c8c8c8;
}

.tab.active {
    height: 30px;
    box-sizing: border-box;
    padding-bottom: 4px;
    background: white;
    color: #111;
    border-right: 0;
}

.tab-x {
    width: 9px;
    height: 9px;
    margin-top: 3px;
    color: #888;
}

.tab-scope {
    width: 78px;
    justify-content: space-between;
}

.tab-untitled {
    width: 95px;
    justify-content: space-between;
}

.tab-src {
    width: 126px;
    box-sizing: border-box;
    justify-content: space-between;
}

.tab-tcl {
    width: 108px;
    justify-content: space-between;
}

.panel-win {
    margin-left: auto;
    display: flex;
    gap: 6px;
    padding: 9px 6px 0 0;
}

.panel-win svg {
    width: 14px;
    height: 14px;
    color: #a0a0a0;
}

.panel-tools {
    flex: 0 0 34px;
    box-sizing: border-box;
    border-bottom: 2px solid #e8e8e8;
    display: flex;
    align-items: center;
}

.tool {
    width: 35px;
    height: 20px;
    box-sizing: border-box;
    border-right: 1px solid #dcdcdc;
    display: flex;
    align-items: center;
    justify-content: center;
    color: #2f4c7e;
}

.tool.off {
    color: #bcbcbc;
}

.tool-end {
    margin-left: auto;
    border-right: 0;
}

.tool svg {
    width: 15px;
    height: 15px;
}

/* scope tree */
.tree-row {
    display: grid;
    grid-template-columns: 105px 75px 116px;
    height: 25px;
    align-items: stretch;
}

.tree-row > div {
    box-sizing: border-box;
    display: flex;
    align-items: center;
    padding-left: 7px;
    border-right: 1px solid #e2e2e2;
    white-space: nowrap;
}

.tree-head {
    height: 24px;
    background: #ececec;
}

.tree-data {
    width: 296px;
    border-bottom: 1px solid #e2e2e2;
    box-sizing: border-box;
}

.tree-row > .tree-cell {
    padding-left: 0;
}

.twist {
    width: 22px;
    flex: none;
    display: flex;
    justify-content: center;
    padding-left: 2px;
    box-sizing: border-box;
    color: #777;
}

.twist svg {
    width: 10px;
    height: 10px;
    margin-right: 5px;
}

.twist.lvl1 {
    width: 38px;
}

.chip {
    width: 14px;
    height: 14px;
    margin-right: 3px;
    flex: none;
}

/* objects strip */
.obj-tabs {
    align-items: center;
    gap: 6px;
    padding-left: 5px;
    color: #a0a0a0;
}

.obj-tabs svg {
    width: 14px;
    height: 14px;
}

.obj-tools {
    padding-left: 9px;
    align-items: center;
    overflow: hidden;
}

.obj-search {
    width: 15px;
    height: 15px;
    flex: none;
    color: #2f4c7e;
}

.more {
    margin: -12px 0 0 6px;
    color: #555;
    font-size: 13px;
}

.obj-body {
    flex: 1;
    display: flex;
    min-height: 0;
}

.obj-list {
    width: 32px;
    overflow: hidden;
}

.obj-head {
    height: 24px;
    line-height: 24px;
    padding-left: 7px;
    background: #ececec;
}

.obj-row {
    box-sizing: border-box;
    height: 25px;
    border-bottom: 1px solid #e4e4e4;
    display: flex;
    align-items: center;
    padding-left: 22px;
}

.obj-row svg {
    flex: none;
    width: 14px;
    height: 16px;
}

.vscroll {
    flex: 0 0 14px;
    box-sizing: border-box;
    border-left: 1px solid #e6e6e6;
    background: #fbfbfb;
    display: flex;
    flex-direction: column;
    justify-content: space-between;
    align-items: center;
    padding: 4px 0;
    color: #777;
}

.vscroll svg {
    width: 11px;
    height: 11px;
    flex: none;
}

.hscroll {
    flex: 0 0 13px;
    box-sizing: border-box;
    border-top: 1px solid #e4e4e4;
    background: #fafafa;
    display: flex;
    align-items: center;
    color: #666;
}

.hscroll svg {
    width: 10px;
    height: 10px;
    flex: none;
}

.obj-hscroll {
    justify-content: space-between;
    padding: 0 3px;
}

/* waveform */
.wave-body {
    flex: 1;
    display: flex;
    min-height: 0;
}

.wave-names {
    flex: 0 0 128px;
}

.wave-head {
    display: flex;
    gap: 4px;
    margin-top: 24px;
    height: 32px;
}

.wave-head > div {
    box-sizing: border-box;
    width: 58px;
    padding-left: 3px;
    border: 1px solid #c4c4c4;
    background: linear-gradient(#f6f6f6, #e2e2e2);
    font-weight: bold;
    font-size: 12px;
    line-height: 28px;
    text-align: center;
}

.sig-row {
    height: 25px;
    display: flex;
    align-items: center;
    padding-left: 23px;
}

.sig-row svg {
    width: 14px;
    height: 16px;
    flex: none;
}

.sig-name {
    width: 31px;
    margin-left: 2px;
}

.wave {
    flex: none;
}

.sigs path {
    fill: #b3ffb3;
    stroke: #00e800;
    stroke-width: 1.5px;
    vector-effect: non-scaling-stroke;
}

.grid {
    stroke: #b4b4b4;
    fill: none;
}

.ruler {
    stroke: #111;
    stroke-width: 1.5;
    stroke-dasharray: 13.9 1;
}

.baseline {
    stroke: #777;
}

.tick {
    font-family: "Liberation Mono", monospace;
    font-size: 11px;
    letter-spacing: -.6px;
    fill: #222;
}

.cursor {
    stroke: #ffff00;
    stroke-width: 1.5;
}

.flag {
    fill: #ffff00;
    stroke: #111;
}

.flag-text {
    font-family: "Liberation Mono", monospace;
    font-size: 11px;
    letter-spacing: -.6px;
    fill: #fff;
}

.names-scroll {
    width: 128px;
    box-sizing: border-box;
    padding: 0 0 0 65px;
    display: flex;
    gap: 33px;
}

.plot-scroll {
    flex: 1;
    display: flex;
    justify-content: space-between;
    padding-right: 3px;
}

/* console */
.tab-msg {
    padding-right: 0;
    width: 74px;
    box-sizing: content-box;
    padding-left: 6px;
}

.tab-log {
    width: 30px;
    padding-left: 6px;
    padding-right: 0;
}

.log-row {
    flex: 0 0 78px;
    display: flex;
    min-height: 0;
    padding-right: 10px;
}

.gutter {
    width: 32px;
    height: 78px;
    flex: none;
}

.log {
    flex: 1;
    padding-left: 2px;
    font-family: "Liberation Mono", monospace;
    font-size: 11px;
    letter-spacing: -.6px;
    line-height: 19px;
    color: #222;
    white-space: nowrap;
}

.log-vscroll {
    padding: 3px 0;
}

.vthumb {
    width: 8px;
    height: 34px;
    border-radius: 4px;
    background: #bdbdbd;
    margin-top: 6px;
}

.log-hscroll {
    margin-left: 32px;
    margin-right: 24px;
    padding: 0 2px;
    border-bottom: 1px solid #e4e4e4;
}

.hthumb {
    width: 1187px;
    height: 8px;
    margin-left: 5px;
    border-radius: 4px;
    background: #bdbdbd;
}

.log-hscroll svg:last-child {
    margin-left: auto;
}

.tcl-input {
    box-sizing: border-box;
    height: 25px;
    margin: 5px 4px 0 3px;
    padding: 1px 0 0 6px;
    border: 1px solid #c4c4c4;
    line-height: 23px;
    font-family: "Liberation Mono", monospace;
    font-size: 11px;
    letter-spacing: -.6px;
    color: #777;
}

/* status and taskbar */
.statusbar {
    flex: 0 0 22px;
    box-sizing: border-box;
    padding-right: 24px;
    background: #ececec;
    text-align: right;
    line-height: 22px;
}

.taskbar {
    flex: 0 0 40px;
    box-sizing: border-box;
    padding-left: 1px;
    display: flex;
    background: #101010;
    color: #eee;
}

.task {
    width: 49px;
    box-sizing: border-box;
    display: flex;
    align-items: center;
    justify-content: center;
    position: relative;
}

.task svg {
    width: 24px;
    height: 24px;
}

.task.start {
    width: 48px;
}

.task.start svg {
    width: 16px;
    height: 16px;
}

.seen {
    border-bottom: 2px solid #66a8e2;
}

.running {
    background: #2d5a28;
    border-bottom: 2px solid #4fe04f;
    width: 40px;
    margin: 0 4.5px;
}

.tux svg {
    height: 28px;
}

.current {
    background: #333;
    border-bottom: 2px solid #66a8e2;
    width: 48px;
    margin-left: 0;
}

.word-w {
    font-family: "Liberation Sans", sans-serif;
    font-weight: bold;
    font-size: 11px;
    fill: #fff;
}

.tray {
    margin-left: auto;
    display: flex;
    align-items: center;
    padding-right: 4px;
    border-right: 1px solid #444;
}

.weather {
    width: 26px;
    height: 24px;
}

.weather-text {
    margin-left: 8px;
    width: 140px;
    white-space: nowrap;
    font-family: "Liberation Sans", "Noto Sans CJK KR", sans-serif;
    font-size: 14px;
}

.tray-up {
    width: 12px;
    height: 12px;
    margin-left: 26px;
}

.tray-ic {
    width: 17px;
    height: 17px;
    margin-left: 8.5px;
}

.tray-a {
    width: 12px;
    margin-left: 8.5px;
    font-size: 18px;
}

.clock {
    width: 70px;
    margin-left: 10px;
    text-align: center;
    font-family: "Liberation Sans", "Noto Sans CJK KR", sans-serif;
    font-size: 13px;
    line-height: 18px;
}

.tray-note {
    width: 16px;
    height: 15px;
    margin: 0 21px 0 17px;
}
```
